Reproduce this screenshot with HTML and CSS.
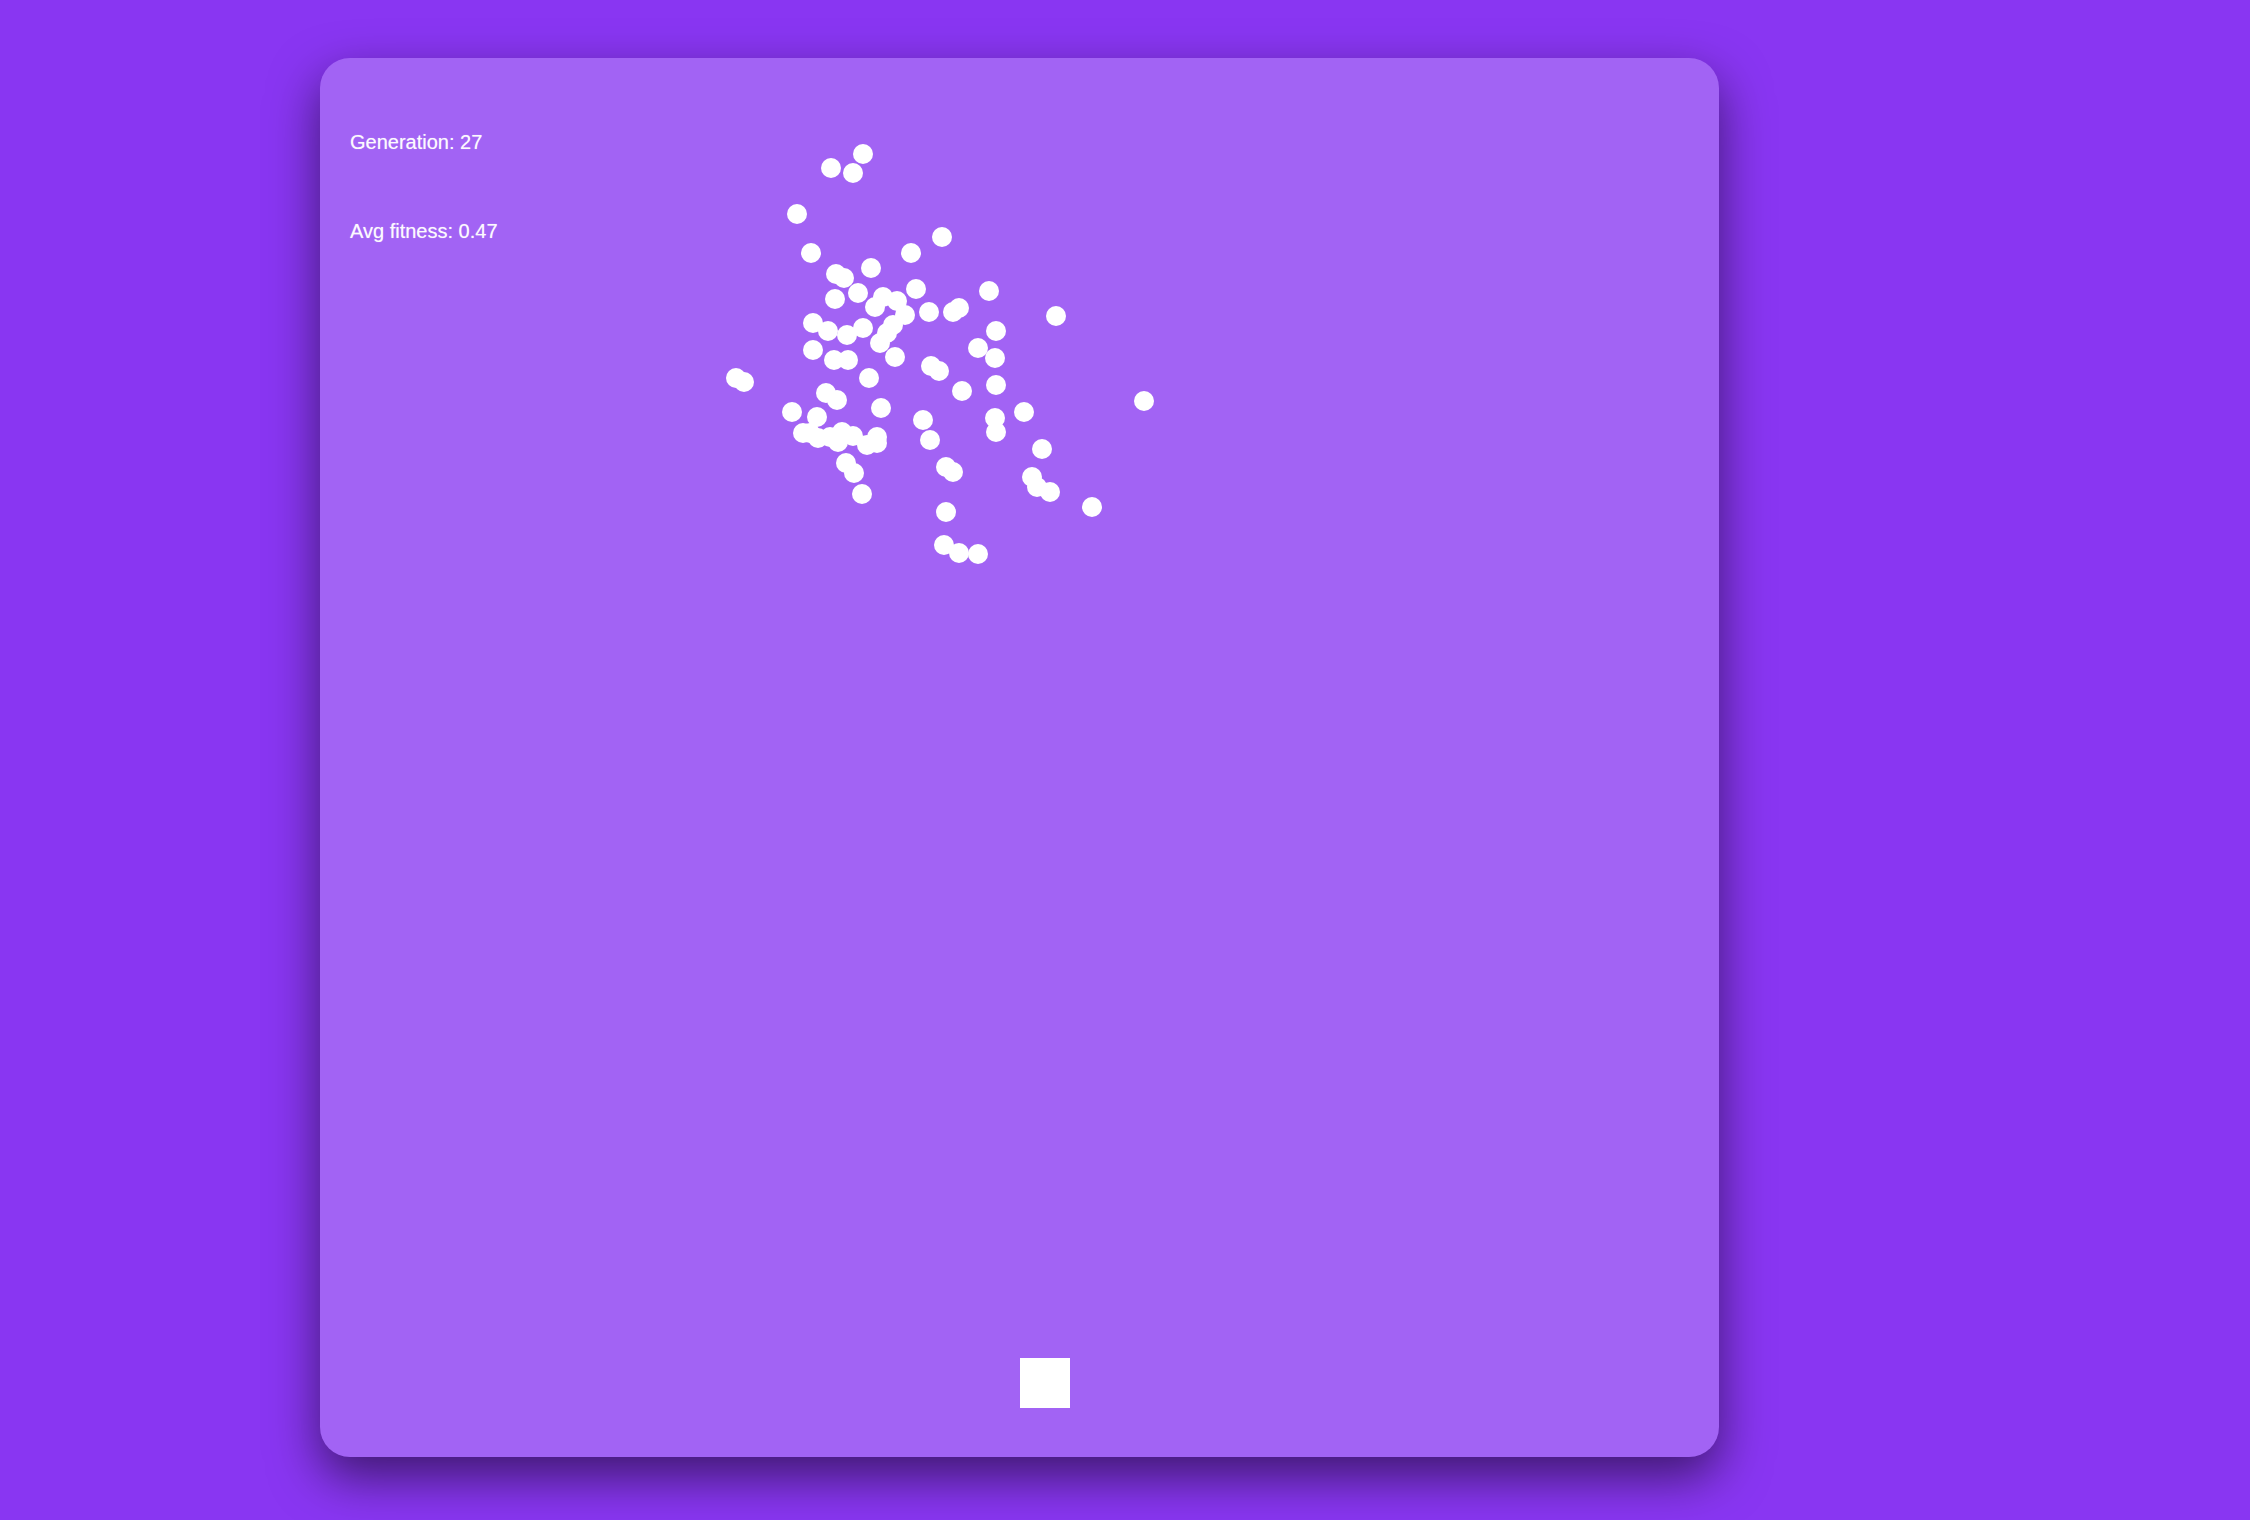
FILE: index.html
```html
<!DOCTYPE html>
<html>
<head>
<meta charset="utf-8">
<link rel="stylesheet" href="styles.css">
</head>
<body>
<div class="card">
  <svg class="canvas" width="1400" height="1400" viewBox="0 0 1400 1400">
    <g fill="#fff">
      <circle cx="543" cy="96" r="10"/><circle cx="511" cy="110" r="10"/><circle cx="533" cy="115" r="10"/>
      <circle cx="477" cy="156" r="10"/><circle cx="622" cy="179" r="10"/><circle cx="491" cy="195" r="10"/>
      <circle cx="591" cy="195" r="10"/><circle cx="551" cy="210" r="10"/><circle cx="516" cy="216" r="10"/>
      <circle cx="524" cy="220" r="10"/><circle cx="596" cy="231" r="10"/><circle cx="669" cy="233" r="10"/>
      <circle cx="538" cy="235" r="10"/><circle cx="515" cy="241" r="10"/><circle cx="563" cy="239" r="10"/>
      <circle cx="577" cy="243" r="10"/><circle cx="555" cy="249" r="10"/><circle cx="585" cy="257" r="10"/>
      <circle cx="609" cy="254" r="10"/><circle cx="633" cy="254" r="10"/><circle cx="639" cy="250" r="10"/>
      <circle cx="736" cy="258" r="10"/><circle cx="493" cy="265" r="10"/><circle cx="508" cy="273" r="10"/>
      <circle cx="527" cy="277" r="10"/><circle cx="543" cy="270" r="10"/><circle cx="573" cy="267" r="10"/>
      <circle cx="567" cy="275" r="10"/><circle cx="560" cy="285" r="10"/><circle cx="676" cy="273" r="10"/>
      <circle cx="493" cy="292" r="10"/><circle cx="514" cy="302" r="10"/><circle cx="528" cy="302" r="10"/>
      <circle cx="575" cy="299" r="10"/><circle cx="658" cy="290" r="10"/><circle cx="675" cy="300" r="10"/>
      <circle cx="416" cy="320" r="10"/><circle cx="424" cy="324" r="10"/><circle cx="549" cy="320" r="10"/>
      <circle cx="611" cy="308" r="10"/><circle cx="619" cy="313" r="10"/><circle cx="676" cy="327" r="10"/>
      <circle cx="642" cy="333" r="10"/><circle cx="506" cy="335" r="10"/><circle cx="517" cy="342" r="10"/>
      <circle cx="824" cy="343" r="10"/><circle cx="472" cy="354" r="10"/><circle cx="561" cy="350" r="10"/>
      <circle cx="704" cy="354" r="10"/><circle cx="603" cy="362" r="10"/><circle cx="675" cy="360" r="10"/>
      <circle cx="676" cy="374" r="10"/><circle cx="497" cy="359" r="10"/><circle cx="490" cy="375" r="10"/>
      <circle cx="498" cy="380" r="10"/><circle cx="510" cy="379" r="10"/><circle cx="522" cy="374" r="10"/>
      <circle cx="533" cy="378" r="10"/><circle cx="547" cy="387" r="10"/><circle cx="557" cy="379" r="10"/>
      <circle cx="557" cy="385" r="10"/><circle cx="610" cy="382" r="10"/><circle cx="722" cy="391" r="10"/>
      <circle cx="526" cy="405" r="10"/><circle cx="534" cy="415" r="10"/><circle cx="626" cy="409" r="10"/>
      <circle cx="633" cy="414" r="10"/><circle cx="712" cy="419" r="10"/><circle cx="730" cy="434" r="10"/>
      <circle cx="717" cy="429" r="10"/><circle cx="772" cy="449" r="10"/><circle cx="542" cy="436" r="10"/>
      <circle cx="626" cy="454" r="10"/><circle cx="624" cy="487" r="10"/><circle cx="639" cy="495" r="10"/>
      <circle cx="658" cy="496" r="10"/><circle cx="518" cy="384" r="10"/><circle cx="483" cy="375" r="10"/>
      <rect x="700" y="1300" width="50" height="50"/>
    </g>
  </svg>
  <div class="stats">
    <div class="stat">Generation: 27</div>
    <div class="stat">Avg fitness: 0.47</div>
  </div>
</div>
</body>
</html>
```

FILE: styles.css
```css
html, body {
  margin: 0;
  padding: 0;
}
body {
  background: #8936f2;
  width: 2250px;
  height: 1520px;
  overflow: hidden;
  font-family: "Liberation Sans", Arial, sans-serif;
}
.card {
  position: relative;
  margin: 58px 0 0 320px;
  width: 1399px;
  height: 1399px;
  border-radius: 30px;
  background: #a263f4;
  box-shadow: 0 20px 50px rgba(0, 0, 0, 0.55);
  overflow: hidden;
}
.canvas {
  position: absolute;
  left: 0;
  top: 0;
}
.stats {
  position: relative;
  padding: 72px 0 0 30px;
  display: flex;
  flex-direction: column;
  gap: 65px;
}
.stat {
  color: rgba(255, 255, 255, 0.94);
  font-size: 20px;
  line-height: 24px;
  text-shadow: 0 0 1px rgba(255, 255, 255, 0.6);
}
```
